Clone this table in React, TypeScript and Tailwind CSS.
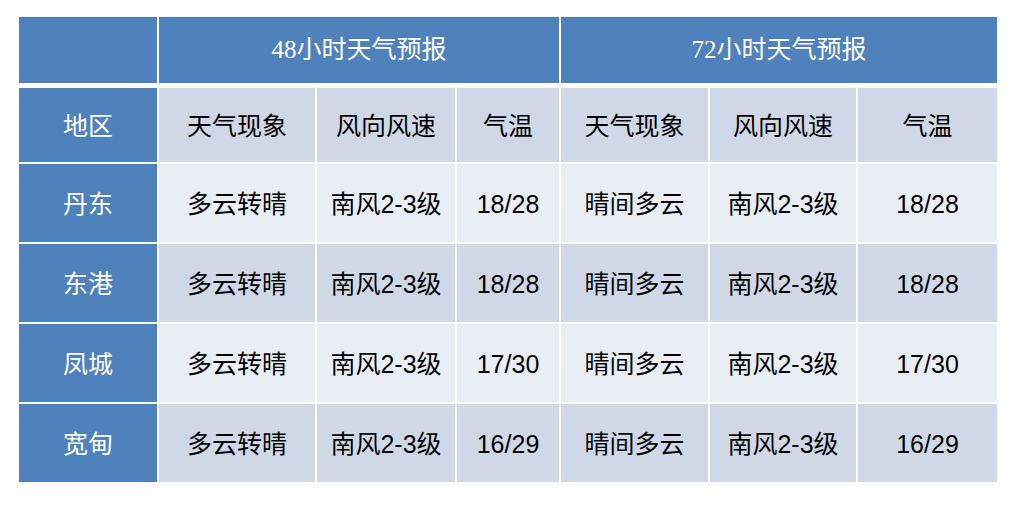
const rows = [
  { area: "丹东", a: "多云转晴", b: "南风2-3级", t: "18/28", c: "晴间多云", d: "南风2-3级", u: "18/28" },
  { area: "东港", a: "多云转晴", b: "南风2-3级", t: "18/28", c: "晴间多云", d: "南风2-3级", u: "18/28" },
  { area: "凤城", a: "多云转晴", b: "南风2-3级", t: "17/30", c: "晴间多云", d: "南风2-3级", u: "17/30" },
  { area: "宽甸", a: "多云转晴", b: "南风2-3级", t: "16/29", c: "晴间多云", d: "南风2-3级", u: "16/29" },
];

const cols = "grid grid-cols-[138px_156px_138px_102px_147px_146px_139px] gap-x-[2px]";
const serif = "font-['Liberation_Serif','Noto_Sans_CJK_SC',serif]";
const cell = "flex items-center justify-center pt-[3px]";

export default function App() {
  return (
    <div className="w-[1012px] h-[510px] bg-white pt-[17px] pl-[19px] font-['Liberation_Sans','Noto_Sans_CJK_SC',sans-serif] text-[25px] text-black">
      <div className="flex flex-col w-[978px]">
        <div className="grid grid-cols-[138px_400px_436px] gap-x-[2px] h-[66px] text-white">
          <div className="bg-[#4f81bd]" />
          <div className={`bg-[#4f81bd] flex items-center justify-center ${serif}`}>48小时天气预报</div>
          <div className={`bg-[#4f81bd] flex items-center justify-center ${serif}`}>72小时天气预报</div>
        </div>

        <div className={`${cols} h-[74px] mt-[5px]`}>
          <div className={`bg-[#4f81bd] text-white ${cell} ${serif}`}>地区</div>
          <div className={`bg-[#d0d8e8] ${cell}`}>天气现象</div>
          <div className={`bg-[#d0d8e8] ${cell}`}>风向风速</div>
          <div className={`bg-[#d0d8e8] ${cell}`}>气温</div>
          <div className={`bg-[#d0d8e8] ${cell}`}>天气现象</div>
          <div className={`bg-[#d0d8e8] ${cell}`}>风向风速</div>
          <div className={`bg-[#d0d8e8] ${cell}`}>气温</div>
        </div>

        {rows.map((r, i) => {
          const bg = i % 2 === 0 ? "bg-[#e9edf4]" : "bg-[#d0d8e8]";
          return (
            <div key={r.area} className={`${cols} h-[78px] mt-[2px]`}>
              <div className={`bg-[#4f81bd] text-white ${cell} ${serif}`}>{r.area}</div>
              <div className={`${bg} ${cell}`}>{r.a}</div>
              <div className={`${bg} ${cell}`}>{r.b}</div>
              <div className={`${bg} ${cell}`}>{r.t}</div>
              <div className={`${bg} ${cell}`}>{r.c}</div>
              <div className={`${bg} ${cell}`}>{r.d}</div>
              <div className={`${bg} ${cell}`}>{r.u}</div>
            </div>
          );
        })}
      </div>
    </div>
  );
}
